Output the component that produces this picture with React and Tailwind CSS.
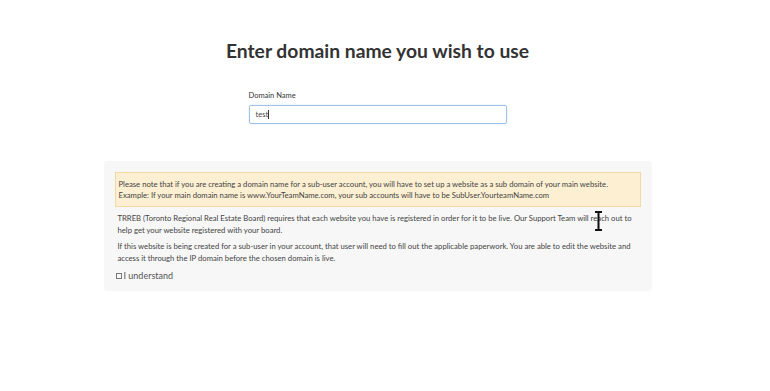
import React from 'react';

export default function App() {
    return (
        <div className="w-[770px] h-[391px] bg-white overflow-hidden font-['Lato',sans-serif] text-[#333]">
            <div className="w-[755px] flex flex-col items-center relative">
                <h1 className="mt-[37px] text-[19.3px] leading-[28px] font-bold text-[#333]">
                    Enter domain name you wish to use
                </h1>

                <div className="mt-[26px] w-[258px]">
                    <label className="block text-[7.5px] leading-[10px] text-[#333]">Domain Name</label>
                    <div className="mt-[4px] h-[19px] border border-[#9fc3e6] rounded-[2px] flex items-center px-[6px] shadow-[0_0_2px_rgba(102,175,233,0.35)]">
                        <span className="text-[7.5px] text-[#444]">test</span>
                        <span className="w-px h-[9px] bg-[#333]"></span>
                    </div>
                </div>

                <div className="mt-[37px] w-[548px] h-[130px] bg-[#f7f7f7] rounded-[3px] px-[11px] pt-[11px]">
                    <div className="bg-[#fcefd2] border border-[#f3d9a5] px-[3px] pt-[6px] pb-[5px] text-[7.7px] leading-[11px] text-[#444]">
                        <p>Please note that if you are creating a domain name for a sub-user account, you will have to set up a website as a sub domain of your main website.</p>
                        <p>Example: If your main domain name is www.YourTeamName.com, your sub accounts will have to be SubUser.YourteamName.com</p>
                    </div>
                    <p className="mt-[6px] text-[7.7px] leading-[11.5px] text-[#444] pl-[3px] pr-[4px]">
                        TRREB (Toronto Regional Real Estate Board) requires that each website you have is registered in order for it to be live. Our Support Team will reach out to help get your website registered with your board.
                    </p>
                    <p className="mt-[4px] text-[7.7px] leading-[12px] text-[#444] pl-[3px] pr-[8px]">
                        If this website is being created for a sub-user in your account, that user will need to fill out the applicable paperwork. You are able to edit the website and access it through the IP domain before the chosen domain is live.
                    </p>
                    <label className="mt-[6px] flex items-center gap-[2px] pl-[1px] text-[9px] leading-[12px] text-[#555]">
                        <span className="w-[6px] h-[6px] border border-[#777] inline-block"></span>
                        I understand
                    </label>
                </div>

                <svg className="absolute left-[594px] top-[211px]" width="9" height="20" viewBox="0 0 9 20">
                    <path d="M1 1h7M4.5 1v18M1 19h7" stroke="#111" strokeWidth="2" fill="none" />
                </svg>
            </div>
        </div>
    );
}
